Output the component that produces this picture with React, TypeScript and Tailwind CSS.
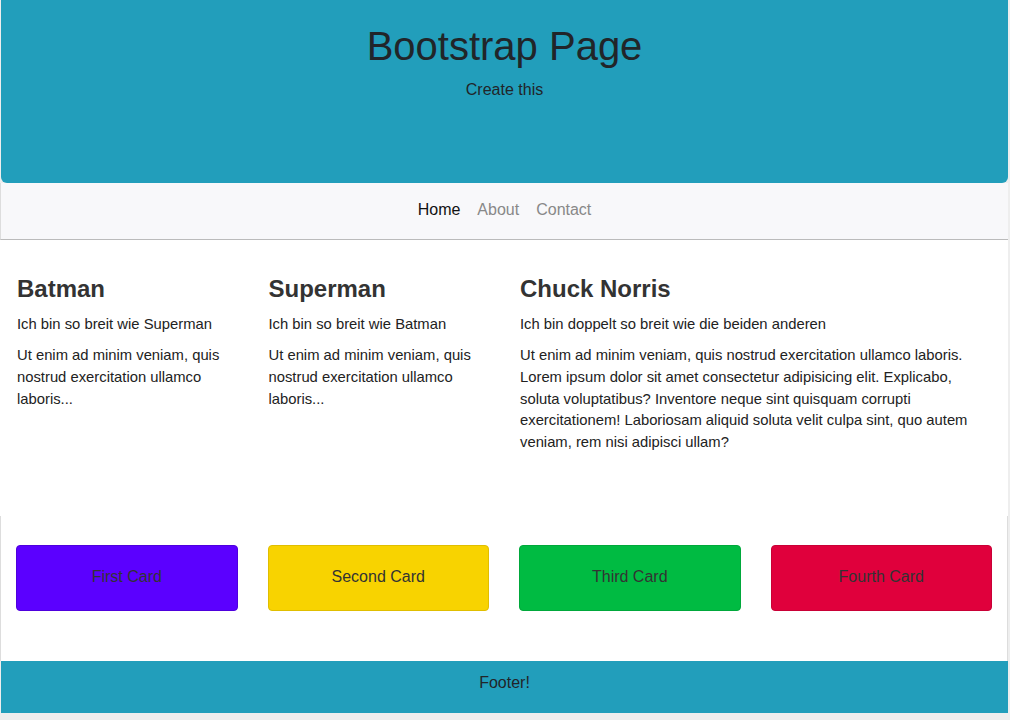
import React from "react";

const heroes = [
    {
        name: "Batman",
        lead: "Ich bin so breit wie Superman",
        text: "Ut enim ad minim veniam, quis nostrud exercitation ullamco laboris...",
        span: "col-span-1",
    },
    {
        name: "Superman",
        lead: "Ich bin so breit wie Batman",
        text: "Ut enim ad minim veniam, quis nostrud exercitation ullamco laboris...",
        span: "col-span-1",
    },
    {
        name: "Chuck Norris",
        lead: "Ich bin doppelt so breit wie die beiden anderen",
        text: "Ut enim ad minim veniam, quis nostrud exercitation ullamco laboris. Lorem ipsum dolor sit amet consectetur adipisicing elit. Explicabo, soluta voluptatibus? Inventore neque sint quisquam corrupti exercitationem! Laboriosam aliquid soluta velit culpa sint, quo autem veniam, rem nisi adipisci ullam?",
        span: "col-span-2",
    },
];

const cards = [
    { label: "First Card", cls: "bg-[#5b00ff] border-[#4e00dd]" },
    { label: "Second Card", cls: "bg-[#f8d300] border-[#e0be00]" },
    { label: "Third Card", cls: "bg-[#00bb42] border-[#00a83b]" },
    { label: "Fourth Card", cls: "bg-[#e0003c] border-[#c90036]" },
];

export default function App() {
    return (
        <div
            className="min-h-[720px] w-full bg-[#eeeeee] text-[#222]"
            style={{ fontFamily: '"Liberation Sans", Arial, sans-serif' }}
        >
            <div className="w-[1008px]">
                <header className="ml-px w-[1007px] h-[183px] bg-[#229ebb] rounded-b-md flex flex-col items-center pt-[22px]">
                    <h1 className="text-[40px] leading-[48px] text-[#212529]">Bootstrap Page</h1>
                    <p className="mt-[8px] text-[16px] leading-[24px] text-[#212529]">Create this</p>
                </header>

                <nav className="h-[57px] bg-[#f8f8fa] border-l border-[#dddddd] border-b border-b-[#bbbbbb] flex items-center justify-center gap-[17px] text-[16px] pb-[2px]">
                    <a className="text-[#111]">Home</a>
                    <a className="text-[#888]">About</a>
                    <a className="text-[#888]">Contact</a>
                </nav>

                <section className="bg-white h-[276px] grid grid-cols-4 px-px pt-[34px]">
                    {heroes.map((h) => (
                        <div key={h.name} className={`${h.span} px-[16px]`}>
                            <h2 className="text-[24px] leading-[30px] font-bold text-[#333]">{h.name}</h2>
                            <p className="mt-[9px] text-[14.8px] leading-[22px] text-[#222]">{h.lead}</p>
                            <p className="mt-[10px] text-[14.8px] leading-[21.75px] text-[#222]">{h.text}</p>
                        </div>
                    ))}
                </section>

                <section className="bg-white border-x border-[#dddddd] h-[145px] pt-[29px] grid grid-cols-4">
                    {cards.map((c) => (
                        <div key={c.label} className="px-[15px]">
                            <div
                                className={`h-[66px] rounded border flex items-center justify-center text-[16px] text-[#333] pb-[2px] ${c.cls}`}
                            >
                                {c.label}
                            </div>
                        </div>
                    ))}
                </section>

                <footer className="ml-px w-[1007px] h-[52px] bg-[#229ebb] flex items-center justify-center text-[16px] text-[#212529] pb-[8px]">
                    Footer!
                </footer>
            </div>
        </div>
    );
}
